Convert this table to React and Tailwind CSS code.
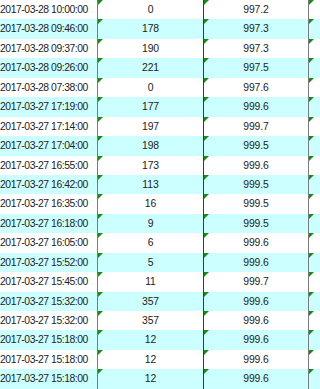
import React from "react";

const rows = [
  ["2017-03-28 10:00:00", "0", "997.2"],
  ["2017-03-28 09:46:00", "178", "997.3"],
  ["2017-03-28 09:37:00", "190", "997.3"],
  ["2017-03-28 09:26:00", "221", "997.5"],
  ["2017-03-28 07:38:00", "0", "997.6"],
  ["2017-03-27 17:19:00", "177", "999.6"],
  ["2017-03-27 17:14:00", "197", "999.7"],
  ["2017-03-27 17:04:00", "198", "999.5"],
  ["2017-03-27 16:55:00", "173", "999.6"],
  ["2017-03-27 16:42:00", "113", "999.5"],
  ["2017-03-27 16:35:00", "16", "999.5"],
  ["2017-03-27 16:18:00", "9", "999.5"],
  ["2017-03-27 16:05:00", "6", "999.6"],
  ["2017-03-27 15:52:00", "5", "999.6"],
  ["2017-03-27 15:45:00", "11", "999.7"],
  ["2017-03-27 15:32:00", "357", "999.6"],
  ["2017-03-27 15:32:00", "357", "999.6"],
  ["2017-03-27 15:18:00", "12", "999.6"],
  ["2017-03-27 15:18:00", "12", "999.6"],
  ["2017-03-27 15:18:00", "12", "999.6"],
];

function Tri() {
  return (
    <svg className="absolute left-0 top-0" width="5" height="5" viewBox="0 0 5 5">
      <polygon points="0,0 5,0 0,5" fill="#1a8a1a" />
    </svg>
  );
}

export default function App() {
  return (
    <div
      className="w-[320px] h-[389px] overflow-hidden bg-white text-[#222]"
      style={{ fontFamily: '"Liberation Sans", Arial, sans-serif' }}
    >
      {rows.map((r, i) => (
        <div
          key={i}
          className={`flex h-[19.45px] text-[10.4px] leading-[19.45px] ${i % 2 ? "bg-[#ccffff]" : "bg-white"}`}
        >
          <div className="w-[97px] shrink-0 whitespace-nowrap overflow-hidden tracking-[-0.45px]">{r[0]}</div>
          <div className="relative w-[106px] shrink-0 border-l border-[#7a7a7a] text-center tracking-[-0.1px]">
            <Tri />
            {r[1]}
          </div>
          <div className="relative w-[105px] shrink-0 border-l border-[#3a3a3a] text-center tracking-[-0.1px]">
            <Tri />
            {r[2]}
          </div>
          <div className="relative flex-1 border-l border-[#7a7a7a]">
            <Tri />
          </div>
        </div>
      ))}
    </div>
  );
}
